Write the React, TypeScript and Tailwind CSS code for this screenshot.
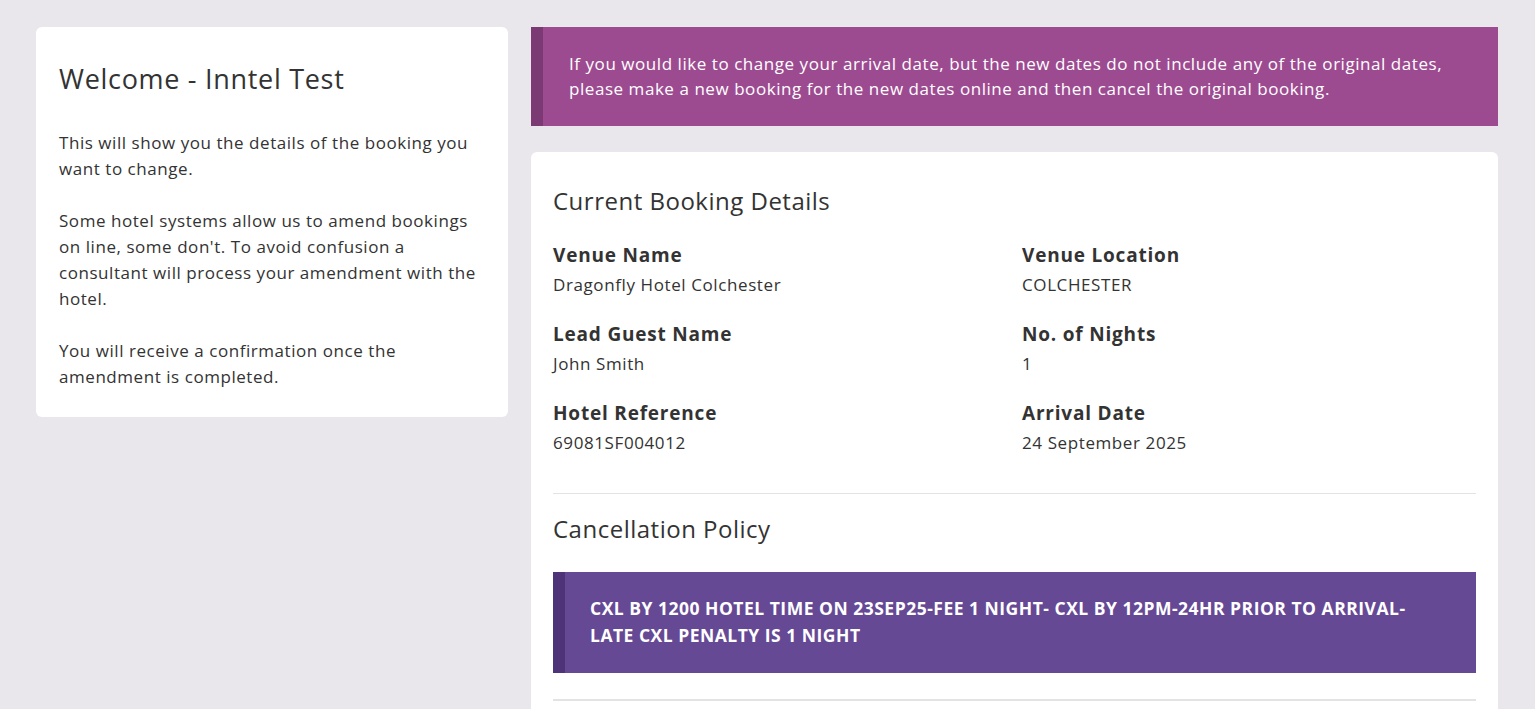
import React from "react";

const font = { fontFamily: "'Open Sans', 'Noto Sans', sans-serif" };

function Field({ label, value }: { label: string; value: string }) {
  return (
    <div className="mb-[19px]">
      <div className="text-[19px] font-bold leading-[28px] tracking-[0.8px] text-[#333333]">{label}</div>
      <div className="text-[17px] leading-[32px] tracking-[0.6px] text-[#333333]">{value}</div>
    </div>
  );
}

export default function App() {
  return (
    <div className="min-h-screen bg-[#e9e7ec] pl-[36px] pr-[37px] pt-[27px]" style={font}>
      <div className="flex items-start gap-[23px]">
        <div className="w-[472px] shrink-0 rounded-[6px] bg-white px-[23px] pb-[27px] pt-[34px] text-[#333333]">
          <h1 className="mb-[33px] text-[27px] leading-[36px] tracking-[0.7px] font-normal">Welcome - Inntel Test</h1>
          <div className="text-[17px] leading-[26px] tracking-[0.55px]">
            <p className="mb-[26px]">This will show you the details of the booking you want to change.</p>
            <p className="mb-[26px]">
              Some hotel systems allow us to amend bookings on line, some don't. To avoid confusion a consultant will
              process your amendment with the hotel.
            </p>
            <p>You will receive a confirmation once the amendment is completed.</p>
          </div>
        </div>
        <div className="flex-1">
          <div className="flex bg-[#9d4b91]">
            <div className="w-[12px] shrink-0 bg-[#7b3a73]" />
            <div className="pt-[24px] pb-[25px] pl-[26px] pr-[26px] text-[17px] font-medium leading-[25px] tracking-[0.55px] text-white">
              If you would like to change your arrival date, but the new dates do not include any of the original
              dates, please make a new booking for the new dates online and then cancel the original booking.
            </div>
          </div>
          <div className="mt-[26px] rounded-[6px] bg-white px-[22px] pt-[34px] pb-[10px] text-[#333333]">
            <h2 className="mb-[25px] text-[24px] leading-[30px] tracking-[0.5px] font-normal">Current Booking Details</h2>
            <div className="grid grid-cols-2 gap-x-[15px] pb-[15px]">
              <Field label="Venue Name" value="Dragonfly Hotel Colchester" />
              <Field label="Venue Location" value="COLCHESTER" />
              <Field label="Lead Guest Name" value="John Smith" />
              <Field label="No. of Nights" value="1" />
              <Field label="Hotel Reference" value="69081SF004012" />
              <Field label="Arrival Date" value="24 September 2025" />
            </div>
            <div className="h-px bg-[#e3e3e3]" />
            <h2 className="mt-[20px] mb-[28px] text-[24px] leading-[30px] tracking-[0.5px] font-normal">Cancellation Policy</h2>
            <div className="flex bg-[#664995]">
              <div className="w-[12px] shrink-0 bg-[#4f3379]" />
              <div className="pt-[23px] pb-[24px] pl-[25px] pr-[25px] text-[17.5px] font-bold uppercase leading-[27px] tracking-[0.5px] text-white">
                CXL BY 1200 HOTEL TIME ON 23SEP25-FEE 1 NIGHT- CXL BY 12PM-24HR PRIOR TO ARRIVAL-
                <br />
                LATE CXL PENALTY IS 1 NIGHT
              </div>
            </div>
            <div className="mt-[26px] h-[2px] bg-[#e3e3e3]" />
            <div className="h-[40px]" />
          </div>
        </div>
      </div>
    </div>
  );
}
